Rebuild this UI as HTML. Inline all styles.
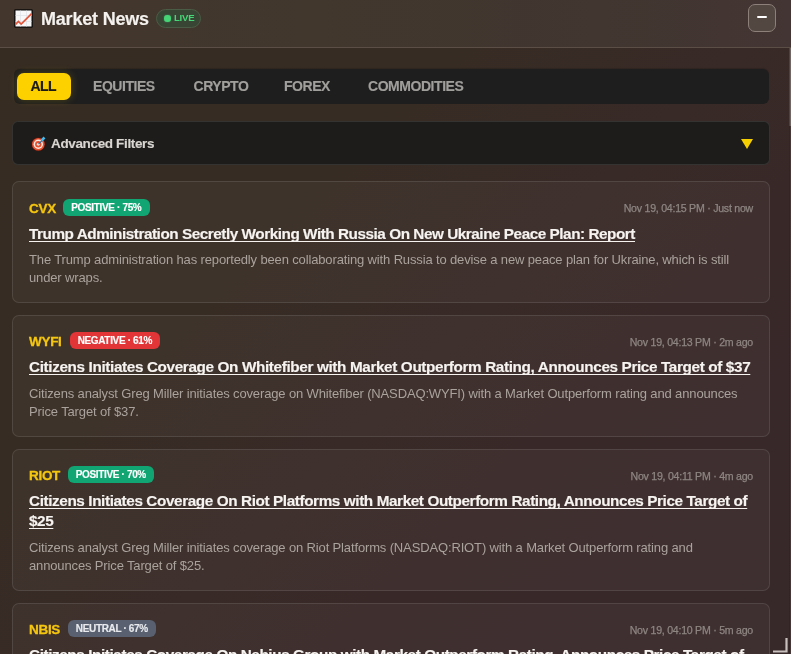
<!DOCTYPE html>
<html>
<head>
<meta charset="utf-8">
<style>
*{box-sizing:border-box;margin:0;padding:0}
html,body{width:791px;height:654px;overflow:hidden}
body{font-family:"Liberation Sans",sans-serif;background:linear-gradient(135deg,#362c22 0%,#372c24 35%,#382a27 55%,#382829 80%,#372829 100%);position:relative;color:#fff}
.hdr{will-change:transform;position:absolute;left:0;top:0;width:791px;height:48px;background:linear-gradient(90deg,#43362d 0%,#41372d 40%,#413630 75%,#433533 100%);border-bottom:1px solid #5a4e46}
.emo1{position:absolute;left:14px;top:9px;width:19px;height:19px}
.title{position:absolute;left:41px;top:9px;font-size:18px;font-weight:bold;color:#f4f1ee;line-height:20px;letter-spacing:-0.2px}
.live{position:absolute;left:156px;top:8.5px;width:45px;height:19px;border-radius:9.5px;background:#384434;border:1px solid #4a5c45}
.live .dot{position:absolute;left:7px;top:5.5px;width:6.5px;height:6.5px;border-radius:50%;background:#45d476;box-shadow:0 0 2px rgba(74,222,128,0.5)}
.live .t{position:absolute;left:17px;top:2.5px;font-size:9.6px;font-weight:bold;color:#47d677;line-height:12px;letter-spacing:-0.25px}
.minbtn{position:absolute;left:748px;top:4px;width:28px;height:28px;border-radius:7px;background:#524741;border:1px solid #8d7f79}
.minbtn i{position:absolute;left:8px;top:10.6px;width:9.8px;height:2.6px;border-radius:1px;background:#fff}
.scroll{position:absolute;left:789px;top:48px;width:2px;height:78px;background:linear-gradient(90deg,rgba(112,102,99,0.4) 50%,#706663 50%)}
.track{position:absolute;left:789px;top:126px;width:2px;height:528px;background:linear-gradient(90deg,rgba(0,0,0,0.1) 50%,rgba(255,255,255,0.07) 50%)}
.tabs{will-change:transform;position:absolute;left:14px;top:69px;width:755px;height:35px;border-radius:6px;background:#1e1e1e;box-shadow:0 -1px 1px rgba(0,0,0,0.15)}
.tab{position:absolute;top:3.5px;height:27px;line-height:27px;font-size:14px;font-weight:bold;color:#a19f9c;letter-spacing:-0.45px}
.tab.on{left:3px;width:54px;border-radius:7px;background:#fdd000;color:#1c1a15;text-align:center;letter-spacing:-0.5px;padding-right:1.5px;box-shadow:0 0 8px rgba(253,208,0,0.22)}
.filt{will-change:transform;position:absolute;left:12px;top:121px;width:758px;height:44px;border-radius:6px;background:#1d1c1b;border:1px solid rgba(255,255,255,0.1)}
.emo2{position:absolute;left:18px;top:14px;width:15px;height:15px;overflow:visible}
.filt .t{position:absolute;left:38px;top:14px;font-size:13.5px;font-weight:bold;color:#d9d5d1;line-height:16px;letter-spacing:-0.35px}
.filt .arr{position:absolute;left:728px;top:17px;width:0;height:0;border-left:6px solid transparent;border-right:6px solid transparent;border-top:10px solid #f5cf00}
.card{position:absolute;left:12px;width:758px;will-change:transform;border:1px solid rgba(255,255,255,0.10);border-radius:7px;background:rgba(255,255,255,0.035)}
.card .tk{position:absolute;left:16px;top:19px;font-size:13.5px;font-weight:bold;color:#f5c60f;line-height:16px;letter-spacing:-0.3px}
.card .bd{position:absolute;top:17px;height:17px;border-radius:6px;font-size:10px;font-weight:bold;color:#fff;line-height:17px;text-align:center;letter-spacing:-0.35px;text-indent:-0.35px}
.pos{background:#10a572}
.neg{background:#e13538}
.neu{background:#596170;color:#e8eaee!important}
.card .ts{position:absolute;right:16px;top:19px;font-size:10.6px;font-weight:normal;color:#8e8682;line-height:14px;white-space:nowrap;letter-spacing:-0.25px;-webkit-text-stroke:0.25px currentColor}
.card .hl{position:absolute;left:16px;top:41px;font-size:15.3px;text-decoration-skip-ink:none;font-weight:bold;color:#f6f3f0;line-height:20px;text-decoration:underline;text-decoration-thickness:1.3px;text-underline-offset:2px;white-space:nowrap}
.card .ds{position:absolute;left:16px;font-size:13px;color:#aaa29c;line-height:18px;white-space:nowrap;letter-spacing:-0.14px}
.card.up .bd{top:16px}
.card.up .tk{top:18px}
.card .tk{-webkit-text-stroke:0.3px currentColor}
.title,.card .hl,.tab,.filt .t,.card .bd{-webkit-text-stroke:0.15px currentColor}
.grip{position:absolute;left:772px;top:637px;width:16px;height:16px}
</style>
</head>
<body>
<div class="hdr">
  <svg class="emo1" viewBox="0 0 19 19">
    <rect x="0.2" y="0.2" width="18.6" height="18.6" fill="#0c0c0c" rx="1.2"/>
    <rect x="1.5" y="1.5" width="16" height="16" fill="#f7f7f8"/>
    <path d="M1.5 6.5H17.5M1.5 12.5H17.5M6.5 1.5V17.5M12.5 1.5V17.5" stroke="#dde3ea" stroke-width="0.7"/>
    <path d="M1.6 15.3L4.4 12.4L7.2 15L17.6 4.6" stroke="#e3553b" stroke-width="1.7" fill="none" stroke-linejoin="miter"/>
  </svg>
  <div class="title">Market News</div>
  <div class="live"><span class="dot"></span><span class="t">LIVE</span></div>
  <div class="minbtn"><i></i></div>
</div>
<div class="scroll"></div><div class="track"></div>

<div class="tabs">
  <div class="tab on">ALL</div>
  <div class="tab" style="left:79px">EQUITIES</div>
  <div class="tab" style="left:179.5px">CRYPTO</div>
  <div class="tab" style="left:270px">FOREX</div>
  <div class="tab" style="left:354px">COMMODITIES</div>
</div>

<div class="filt">
  <svg class="emo2" viewBox="0 0 15 15">
    <circle cx="7.3" cy="8.3" r="7" fill="#4a140c"/>
    <circle cx="7.3" cy="8.3" r="6.3" fill="#e5502f"/>
    <circle cx="7.3" cy="8.3" r="4.7" fill="#fbe8e0"/>
    <circle cx="7.3" cy="8.3" r="3.2" fill="#e5502f"/>
    <circle cx="7.3" cy="8.3" r="1.4" fill="#fbe8e0"/>
    <path d="M7.5 8.1L11.5 4.1" stroke="#1f6ea6" stroke-width="1.3"/>
    <path d="M9.6 3.6L12.6 0.6L14.4 2.4L11.4 5.4Z" fill="#45b8ec"/>
  </svg>
  <div class="t">Advanced Filters</div>
  <div class="arr"></div>
</div>

<div class="card" style="top:181px;height:122px">
  <div class="tk">CVX</div>
  <div class="bd pos" style="left:50px;width:87px">POSITIVE · 75%</div>
  <div class="ts">Nov 19, 04:15 PM · Just now</div>
  <div class="hl" style="letter-spacing:-0.46px;top:42px">Trump Administration Secretly Working With Russia On New Ukraine Peace Plan: Report</div>
  <div class="ds" style="top:69px">The Trump administration has reportedly been collaborating with Russia to devise a new peace plan for Ukraine, which is still<br>under wraps.</div>
</div>

<div class="card up" style="top:315px;height:122px">
  <div class="tk">WYFI</div>
  <div class="bd neg" style="left:57px;width:90px">NEGATIVE · 61%</div>
  <div class="ts">Nov 19, 04:13 PM · 2m ago</div>
  <div class="hl" style="letter-spacing:-0.37px">Citizens Initiates Coverage On Whitefiber with Market Outperform Rating, Announces Price Target of $37</div>
  <div class="ds" style="top:69px">Citizens analyst Greg Miller initiates coverage on Whitefiber (NASDAQ:WYFI) with a Market Outperform rating and announces<br>Price Target of $37.</div>
</div>

<div class="card up" style="top:449px;height:142px">
  <div class="tk">RIOT</div>
  <div class="bd pos" style="left:55px;width:86px">POSITIVE · 70%</div>
  <div class="ts">Nov 19, 04:11 PM · 4m ago</div>
  <div class="hl" style="letter-spacing:-0.40px">Citizens Initiates Coverage On Riot Platforms with Market Outperform Rating, Announces Price Target of<br>$25</div>
  <div class="ds" style="top:89px">Citizens analyst Greg Miller initiates coverage on Riot Platforms (NASDAQ:RIOT) with a Market Outperform rating and<br>announces Price Target of $25.</div>
</div>

<div class="card up" style="top:603px;height:142px">
  <div class="tk">NBIS</div>
  <div class="bd neu" style="left:55px;width:88px">NEUTRAL · 67%</div>
  <div class="ts">Nov 19, 04:10 PM · 5m ago</div>
  <div class="hl" style="letter-spacing:-0.41px">Citizens Initiates Coverage On Nebius Group with Market Outperform Rating, Announces Price Target of<br>$42</div>
</div>

<svg class="grip" viewBox="0 0 16 16"><path d="M14.5 1V14.5H1" stroke="#c8c0bd" stroke-width="2.2" fill="none"/></svg>
</body>
</html>
